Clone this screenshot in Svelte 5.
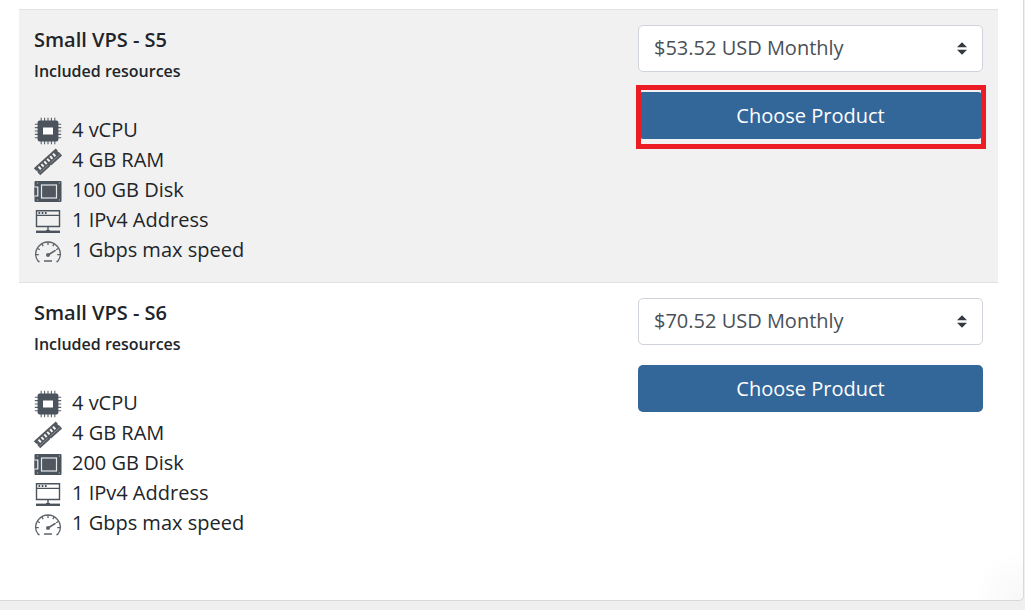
<script>
  const cycle = (price) => `$${price} USD Monthly`;

  const products = [
    {
      id: 's5',
      name: 'Small VPS - S5',
      price: cycle('53.52'),
      highlighted: true,
      resources: [
        { icon: 'cpu', label: '4 vCPU' },
        { icon: 'ram', label: '4 GB RAM' },
        { icon: 'disk', label: '100 GB Disk' },
        { icon: 'network', label: '1 IPv4 Address' },
        { icon: 'speed', label: '1 Gbps max speed' }
      ]
    },
    {
      id: 's6',
      name: 'Small VPS - S6',
      price: cycle('70.52'),
      highlighted: false,
      resources: [
        { icon: 'cpu', label: '4 vCPU' },
        { icon: 'ram', label: '4 GB RAM' },
        { icon: 'disk', label: '200 GB Disk' },
        { icon: 'network', label: '1 IPv4 Address' },
        { icon: 'speed', label: '1 Gbps max speed' }
      ]
    }
  ];
</script>

{#snippet glyph(name)}
  <svg class="icon" viewBox="0 -1 28 28" aria-hidden="true">
    {#if name === 'cpu'}
      <path
        d="M7.2 .8V27.2M10.6 .8V27.2M14 .8V27.2M17.4 .8V27.2M20.8 .8V27.2M.8 7.2H27.2M.8 10.6H27.2M.8 14H27.2M.8 17.4H27.2M.8 20.8H27.2"
        fill="none" stroke="#5a616a" stroke-width="1.1" />
      <rect x="3.6" y="3.6" width="20.8" height="20.8" rx="2" fill="#4b535d" />
      <path fill="#fff" d="M9 10.5H19V17.5H9Z" />
    {:else if name === 'ram'}
      <g transform="translate(14 14.5) rotate(-42)">
        <path fill="#54595f" d="M-15 -4.5H14.5V-1.5L13.5 -.5L14.5 .5V5H0L-1 4L-2 5H-15V1L-14 0L-15 -1Z" />
        <path
          stroke="#f4f4f4" stroke-width="2" fill="none"
          d="M-10.5 -2.5V1M-6.6 -2.5V1M-2.7 -2.5V1M1.2 -2.5V1M5.1 -2.5V1M9 -2.5V1" />
        <path stroke="#a4a8ac" stroke-width=".6" fill="none" d="M-14 2.8H-2.5M.5 2.8H13.5" />
      </g>
    {:else if name === 'disk'}
      <rect x="0.5" y="4" width="27" height="21" rx="1" fill="#4b535d" />
      <rect x="7.5" y="8" width="15" height="13" fill="#50575f" stroke="#e6e8ea" stroke-width="1.2" />
      <path d="M.5 10H3.8V19H.5" fill="#50575f" stroke="#f0f1f2" stroke-width="1.2" />
      <path d="M3 6H4.2M3 23H4.2M24.8 6H26M24.8 23H26" stroke="#b9bdc2" stroke-width="1.2" />
    {:else if name === 'network'}
      <path
        fill="none" stroke="#4b535d" stroke-width="1.4"
        d="M2.5 3.7H25.5V19.5H2.5ZM2.5 8.4H25.5M14 19.3V24.5" />
      <path stroke="#4b535d" stroke-width="1.8" d="M4.5 6H6.2M7.7 6H9.4M10.9 6H12.6" />
      <path stroke="#4b535d" stroke-width="2.4" d="M2 24.8H26" />
      <path stroke="#4b535d" stroke-width="3" d="M12 24.5H16" />
    {:else}
      <path
        fill="none" stroke="#5d636a" stroke-width="1.3"
        d="M5.6 24.5H4.4C2.6 22.5 1.6 20 1.6 17.6C1.6 10.6 7.2 5 14 5S26.4 10.6 26.4 17.6C26.4 20 25.4 22.5 23.6 24.5H22.4M10 24H18" />
      <path
        fill="none" stroke="#5d636a" stroke-width="1.3"
        d="M1.8 17.6H4.8M23.2 17.6H26.2M3.4 11.3L5.8 12.7M24.6 11.3L22.2 12.7M7.8 6.8L9.2 9.2M20.2 6.8L18.8 9.2M14 5V8" />
      <path stroke="#5d636a" stroke-width="1.7" stroke-linecap="round" d="M14.5 17.7L21 13.6" />
      <circle cx="14" cy="18" r="2" fill="#5d636a" />
    {/if}
  </svg>
{/snippet}

<main class="card">
  <div class="products">
    {#each products as product (product.id)}
      <section class="product">
        <div class="details">
          <h2>{product.name}</h2>
          <h3>Included resources</h3>
          <ul>
            {#each product.resources as item}
              <li>{@render glyph(item.icon)}<span>{item.label}</span></li>
            {/each}
          </ul>
        </div>
        <div class="order">
          <select aria-label={`Billing cycle for ${product.name}`}>
            <option>{product.price}</option>
          </select>
          <div class="action" class:highlighted={product.highlighted}>
            <button type="button">Choose Product</button>
          </div>
        </div>
      </section>
    {/each}
  </div>
</main>

<style>
  :global(body) {
    background: #efefef;
    color: #212529;
    font-family: 'Open Sans', 'Noto Sans', sans-serif;
    font-size: 20px;
    line-height: 30px;
  }

  .card {
    margin-right: 1px;
    padding: 9px 25px 45px 19px;
    border: solid #d9d9d9;
    border-width: 0 1px 1px 0;
    border-bottom-right-radius: 5px;
    background: radial-gradient(circle at 100% 100%, #f7f7f7, #fff 50px);
  }

  .product {
    display: grid;
    grid-template-columns: minmax(0, 1fr) 345px;
    padding: 15px 15px 17px;
    border-top: 1px solid #dee2e6;
  }

  .product:nth-child(odd) {
    background: #f1f1f1;
  }

  h2,
  h3 {
    margin: 0;
    font-weight: 600;
  }

  h2 {
    font-size: 20px;
  }

  h3 {
    margin-top: 4px;
    font-size: 16px;
    line-height: 24px;
  }

  ul {
    margin: 32px 0 0;
    padding: 0;
    list-style: none;
  }

  li {
    display: flex;
    align-items: center;
    gap: 10px;
  }

  .icon {
    width: 28px;
    height: 28px;
    flex: none;
    overflow: visible;
  }

  .order {
    display: flex;
    flex-direction: column;
    gap: 20px;
  }

  select,
  button {
    display: block;
    box-sizing: border-box;
    width: 100%;
    height: 47px;
    border-radius: 5px;
    font: inherit;
  }

  select {
    appearance: none;
    padding: 0 35px 1px 15px;
    border: 1px solid #ced4da;
    color: #495057;
    background: #fff
      url("data:image/svg+xml,%3Csvg xmlns='http://www.w3.org/2000/svg' viewBox='0 0 4 5'%3E%3Cpath fill='%23343a40' d='M2 0L0 2h4zm0 5L0 3h4z'/%3E%3C/svg%3E")
      no-repeat right 15px center / 10px 13px;
  }

  .action {
    position: relative;
  }

  button {
    padding: 0;
    border: 0;
    color: #fff;
    background: #336699;
    cursor: pointer;
  }

  .highlighted::after {
    content: '';
    position: absolute;
    inset: -7px -3px -10px -2px;
    border: 5px solid #ec1c24;
    pointer-events: none;
  }
</style>
